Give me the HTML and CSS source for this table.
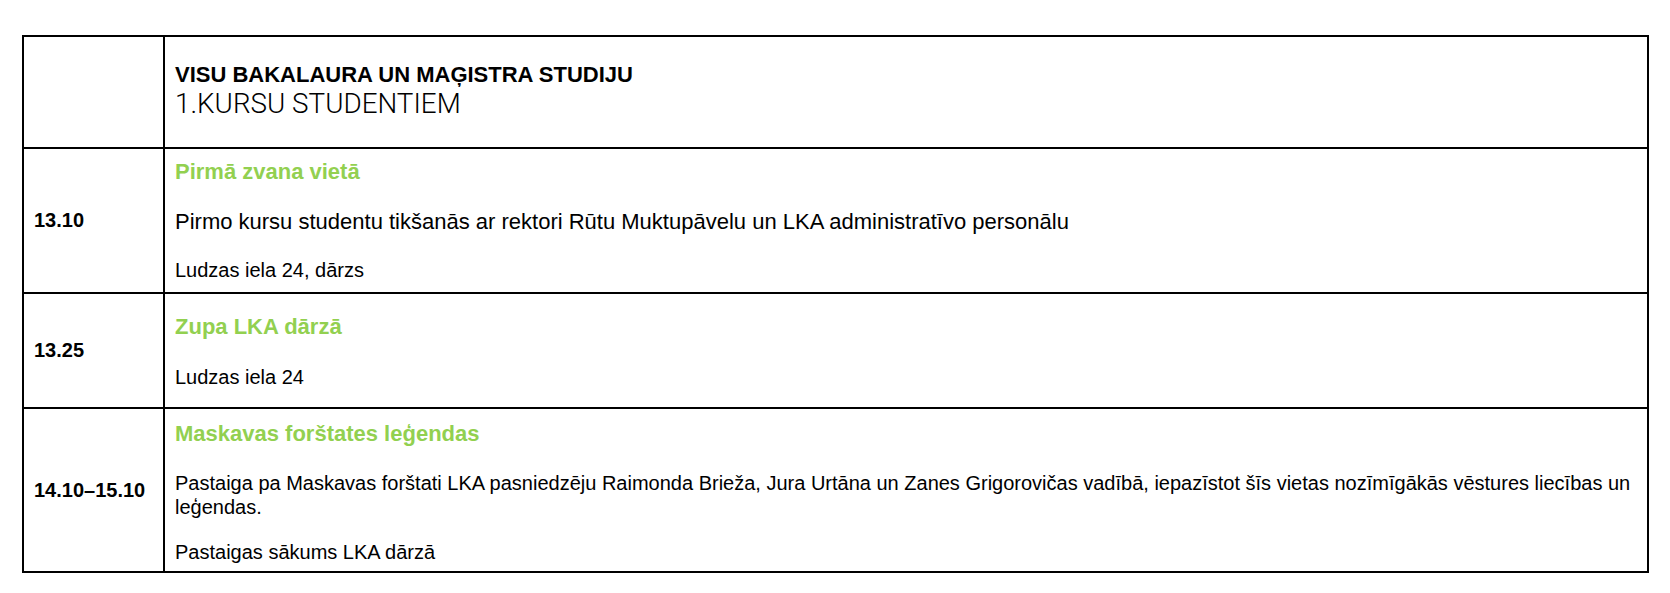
FILE: index.html
```html
<!DOCTYPE html>
<html lang="lv">
<head>
<meta charset="utf-8">
<title>Programma</title>
<link rel="stylesheet" href="styles.css">
</head>
<body>
<div class="schedule">
  <div class="cell time"></div>
  <div class="cell content head">
    <p class="head-top">VISU BAKALAURA UN MAĢISTRA STUDIJU</p>
    <p class="head-sub">1.KURSU STUDENTIEM</p>
  </div>

  <div class="cell time">13.10</div>
  <div class="cell content r1">
    <p class="title">Pirmā zvana vietā</p>
    <p class="desc">Pirmo kursu studentu tikšanās ar rektori Rūtu Muktupāvelu un LKA administratīvo personālu</p>
    <p class="place">Ludzas iela 24, dārzs</p>
  </div>

  <div class="cell time">13.25</div>
  <div class="cell content r2">
    <p class="title">Zupa LKA dārzā</p>
    <p class="place">Ludzas iela 24</p>
  </div>

  <div class="cell time">14.10–15.10</div>
  <div class="cell content r3">
    <p class="title">Maskavas forštates leģendas</p>
    <p class="desc-small">Pastaiga pa Maskavas forštati LKA pasniedzēju Raimonda Brieža, Jura Urtāna un Zanes Grigorovičas vadībā, iepazīstot šīs vietas nozīmīgākās vēstures liecības un leģendas.</p>
    <p class="place">Pastaigas sākums LKA dārzā</p>
  </div>
</div>
</body>
</html>
```

FILE: styles.css
```css
* { box-sizing: border-box; }

html, body {
  margin: 0;
  padding: 0;
  background: #fff;
}

body {
  font-family: "Liberation Sans", Arial, sans-serif;
  color: #000;
}

p { margin: 0; }

.schedule {
  display: grid;
  grid-template-columns: 141px 1fr;
  grid-template-rows: 112px 145px 115px 164px;
  width: 1627px;
  margin: 35px 0 0 22px;
  border-top: 2px solid #000;
  border-left: 2px solid #000;
}

.cell {
  border-right: 2px solid #000;
  border-bottom: 2px solid #000;
}

.time {
  display: flex;
  align-items: center;
  padding-left: 10px;
  font-weight: bold;
  font-size: 20px;
}

.content {
  padding-left: 10px;
  padding-right: 8px;
}

.head { padding-top: 26px; }

.head-top {
  font-weight: bold;
  font-size: 22px;
  line-height: 24px;
}

.head-sub {
  margin-top: 2px;
  font-family: Roboto, "Liberation Sans", sans-serif;
  font-weight: 300;
  font-size: 27.8px;
  line-height: 30px;
  color: #000;
}

.title {
  color: #92d050;
  font-weight: bold;
  font-size: 22px;
  line-height: 26px;
}

.desc {
  font-size: 22px;
  line-height: 25px;
  margin-top: 24px;
}

.desc-small {
  font-size: 20px;
  line-height: 24.5px;
  margin-top: 24px;
}

.place {
  font-size: 20px;
  line-height: 23px;
}

.r1 { padding-top: 9.5px; }
.r1 .place { margin-top: 25px; }

.r2 { padding-top: 20px; }
.r2 .place { margin-top: 25.5px; }

.r3 { padding-top: 11.5px; }
.r3 .place { margin-top: 21px; }
```
